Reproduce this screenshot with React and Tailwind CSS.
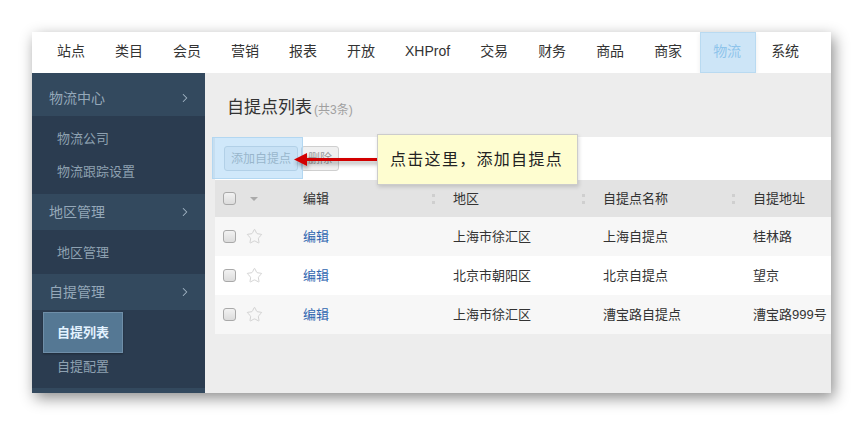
import React from 'react'
import { ChevronRight, Star } from 'lucide-react'

const NAV = ['站点', '类目', '会员', '营销', '报表', '开放', 'XHProf', '交易', '财务', '商品', '商家', '物流', '系统']

const ROWS = [
  { region: '上海市徐汇区', name: '上海自提点', addr: '桂林路', bg: 'bg-[#f7f7f7]' },
  { region: '北京市朝阳区', name: '北京自提点', addr: '望京', bg: 'bg-white' },
  { region: '上海市徐汇区', name: '漕宝路自提点', addr: '漕宝路999号', bg: 'bg-[#f7f7f7]' },
]

function Checkbox() {
  return <span className="block w-[13px] h-[13px] rounded-[3px] border border-[#a9a9a9] bg-gradient-to-b from-[#f2f2f2] to-[#dcdcdc]" />
}

function SideHeader({ label, h }) {
  return (
    <div className={`${h} shrink-0 bg-[#33495e] flex items-center justify-between pl-[17px] pr-[13px] text-[14px] text-[#95a8b9]`}>
      <span>{label}</span>
      <ChevronRight size={14} strokeWidth={1.8} className="text-[#a3b5c5]" />
    </div>
  )
}

function SideItem({ label }) {
  return <div className="h-[33px] flex items-center pl-[25px] text-[13px] text-[#8ea1b1]">{label}</div>
}

function Handle() {
  return <span className="w-[3px] h-[10px] border-l-[3px] border-dotted border-[#cfcfcf]" />
}

export default function App() {
  return (
    <div className="w-[863px] h-[425px] bg-white pt-[32px] pl-[32px] overflow-hidden" style={{ fontFamily: '"Liberation Sans", "Noto Sans CJK SC", sans-serif' }}>
      <div className="w-[799px] h-[361px] flex flex-col overflow-hidden shadow-[3px_5px_14px_rgba(0,0,0,0.45)]">
        {/* top nav */}
        <div className="h-[41px] bg-white flex items-stretch pl-[10px] shrink-0">
          {NAV.map((n) => (
            <div
              key={n}
              className={`flex items-center pb-[3px] text-[14px] ${n === '物流' ? 'ml-[3px] pl-[12px] pr-[14px] bg-[#cde5f7] border border-[#b9daf1] text-[#8ec4eb] shadow-[0_2px_5px_rgba(0,0,0,0.08)]' : 'px-[15px] text-[#333]'}`}
            >
              {n}
            </div>
          ))}
        </div>

        <div className="flex flex-1 min-h-0">
          {/* sidebar */}
          <div className="w-[173px] bg-[#2b3c50] flex flex-col shrink-0 overflow-hidden">
            <SideHeader label="物流中心" h="h-[43px] pt-[7px]" />
            <div className="py-[6px] shrink-0">
              <SideItem label="物流公司" />
              <SideItem label="物流跟踪设置" />
            </div>
            <SideHeader label="地区管理" h="h-[36px]" />
            <div className="pt-[6px] pb-[5px] shrink-0">
              <SideItem label="地区管理" />
            </div>
            <SideHeader label="自提管理" h="h-[36px]" />
            <div className="pt-[2px] pb-[7px] shrink-0">
              <div className="ml-[11px] w-[80px] h-[41px] bg-[#557894] border border-[#6f8ea8] flex items-center pl-[13px] text-[13px] font-bold text-[#e3f2ff] shadow-[0_1px_2px_rgba(0,0,0,0.3)]">
                自提列表
              </div>
              <div className="h-[28px] flex items-center pl-[25px] text-[13px] text-[#8ea1b1]">自提配置</div>
            </div>
            <div className="h-[36px] shrink-0 bg-[#33495e]" />
          </div>

          {/* main */}
          <div className="flex-1 bg-[#ededed] pl-[10px] flex flex-col">
            <div className="h-[64px] flex items-center pt-[6px] pl-[12px]">
              <span className="text-[17px] text-[#333]">自提点列表</span>
              <span className="text-[12px] text-[#a0a0a0] ml-[2px] mt-[4px]">(共3条)</span>
            </div>

            {/* toolbar */}
            <div className="relative h-[43px] bg-white flex items-start pt-[9px] pl-[9px] gap-[3px]">
              <div className="h-[25px] px-[6px] flex items-center rounded-[3px] border border-[#c9d4dc] bg-[#eef3f6] text-[12px] text-[#9aa3aa]">添加自提点</div>
              <div className="h-[25px] px-[6px] flex items-center rounded-[3px] border border-[#cfcfcf] bg-[#f0f0f0] text-[12px] text-[#999]">删除</div>

              {/* highlight overlay */}
              <div className="absolute left-[-3px] top-0 w-[91px] h-[42px] bg-[rgba(150,205,245,0.45)] border border-[#b3d7f1]" />

              {/* arrow */}
              <svg className="absolute left-[78px] top-[14px]" width="86" height="20" viewBox="0 0 86 20">
                <defs>
                  <filter id="sh" x="-10%" y="-50%" width="130%" height="250%">
                    <feDropShadow dx="1" dy="3" stdDeviation="2" floodColor="#000" floodOpacity="0.35" />
                  </filter>
                </defs>
                <g filter="url(#sh)">
                  <rect x="10" y="7" width="76" height="3" fill="#d20000" />
                  <polygon points="1,8.5 14,2 14,15" fill="#d20000" />
                </g>
              </svg>

              {/* callout */}
              <div className="absolute left-[162px] top-[-3px] w-[201px] h-[51px] bg-[#fefdd0] border border-[#cccccc] flex items-center pl-[12px] text-[16px] tracking-[1.3px] text-[#222] shadow-[1px_2px_4px_rgba(0,0,0,0.15)]">
                点击这里，添加自提点
              </div>
            </div>

            {/* table */}
            <div className="text-[13px] text-[#333]">
              <div className="h-[37px] bg-[#e3e3e3] flex items-center">
                <div className="w-[70px] flex items-center pl-[8px] gap-[14px]">
                  <Checkbox />
                  <span className="w-0 h-0 border-l-[4px] border-r-[4px] border-t-[4px] border-l-transparent border-r-transparent border-t-[#aaa]" />
                </div>
                <div className="w-[150px] flex items-center justify-between pl-[18px]"><span>编辑</span><Handle /></div>
                <div className="w-[150px] flex items-center justify-between pl-[18px]"><span>地区</span><Handle /></div>
                <div className="w-[150px] flex items-center justify-between pl-[18px]"><span>自提点名称</span><Handle /></div>
                <div className="pl-[18px]">自提地址</div>
              </div>
              {ROWS.map((r, i) => (
                <div key={i} className={`h-[39px] ${r.bg} flex items-center`}>
                  <div className="w-[70px] flex items-center pl-[8px] gap-[10px]">
                    <Checkbox />
                    <Star size={17} strokeWidth={1.1} className="text-[#c8c8c8]" />
                  </div>
                  <div className="w-[150px] pl-[18px] text-[#2f66b0]">编辑</div>
                  <div className="w-[150px] pl-[18px]">{r.region}</div>
                  <div className="w-[150px] pl-[18px]">{r.name}</div>
                  <div className="pl-[18px] whitespace-nowrap">{r.addr}</div>
                </div>
              ))}
            </div>
          </div>
        </div>
      </div>
    </div>
  )
}
